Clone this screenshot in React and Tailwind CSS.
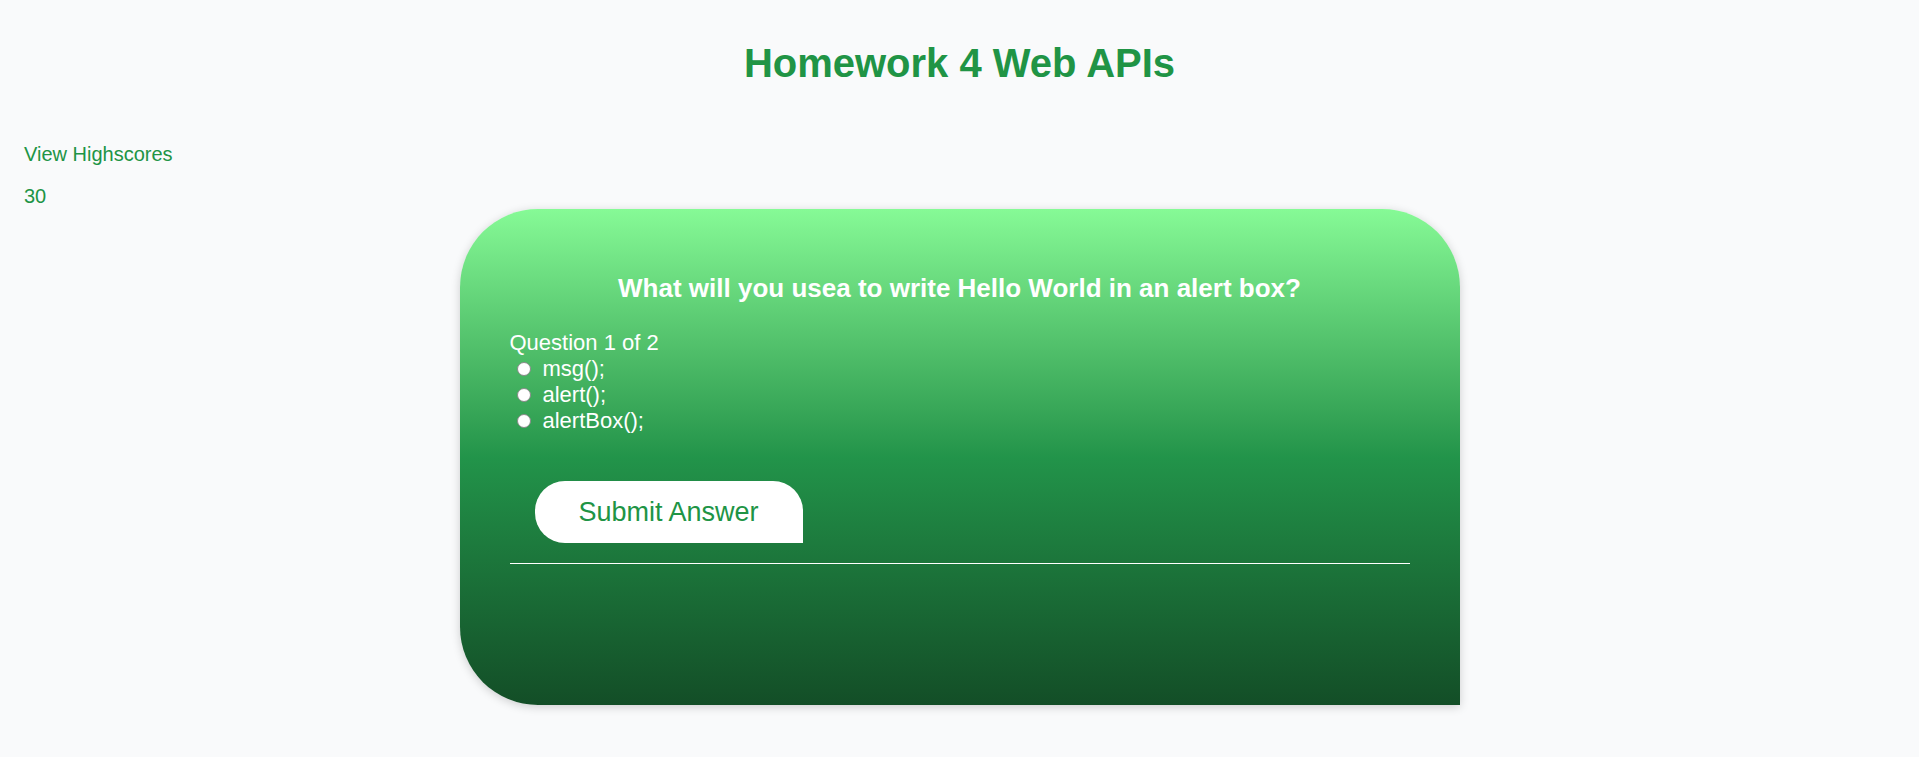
import React, { useState } from 'react';

const options = ['msg();', 'alert();', 'alertBox();'];

const App = () => {
  const [picked, setPicked] = useState(null);

  return (
    <div className="min-h-screen bg-[#f9fafb] font-['Liberation_Sans',Arial,sans-serif] leading-[normal] pb-[53px]">
      {/* header */}
      <h1 className="pt-[40px] text-center text-[40px] leading-[46px] font-bold text-[#209445]">
        Homework 4 Web APIs
      </h1>

      {/* highscores + timer */}
      <div className="mt-[57px] pl-6 text-[20px] text-[#209445]">
        <a href="#" className="block">View Highscores</a>
        <p className="mt-[19px]">30</p>
      </div>

      {/* quiz card */}
      <div className="mx-auto mt-[1px] w-[1000px] h-[496px] rounded-[78px] rounded-br-none bg-linear-to-b from-[#86fa96] via-[#22944a] to-[#134e27] px-[50px] pt-[64px] text-white shadow-[0_2px_10px_rgba(0,0,0,0.18)]">
        <h2 className="text-center text-[26px] leading-[30px] font-bold">
          What will you usea to write Hello World in an alert box?
        </h2>

        <div className="mt-[27px] text-[22px]">
          <p>Question 1 of 2</p>
          {options.map((opt, i) => (
            <label key={opt} className="block">
              <input
                type="radio"
                name="answer"
                checked={picked === i}
                onChange={() => setPicked(i)}
                className="appearance-none ml-[7px] mr-[12px] w-[14px] h-[14px] rounded-full border border-[#8a8a8a] bg-white checked:border-[4px] checked:border-[#1a73e8]"
              />
              {opt}
            </label>
          ))}
        </div>

        <button
          type="button"
          className="mt-[47px] ml-[25px] h-[62px] w-[268px] rounded-[30px] rounded-br-none bg-white text-[27px] text-[#209445]"
        >
          Submit Answer
        </button>

        <hr className="mt-[20px] border-0 border-t border-white" />
      </div>
    </div>
  );
};

export default App;
